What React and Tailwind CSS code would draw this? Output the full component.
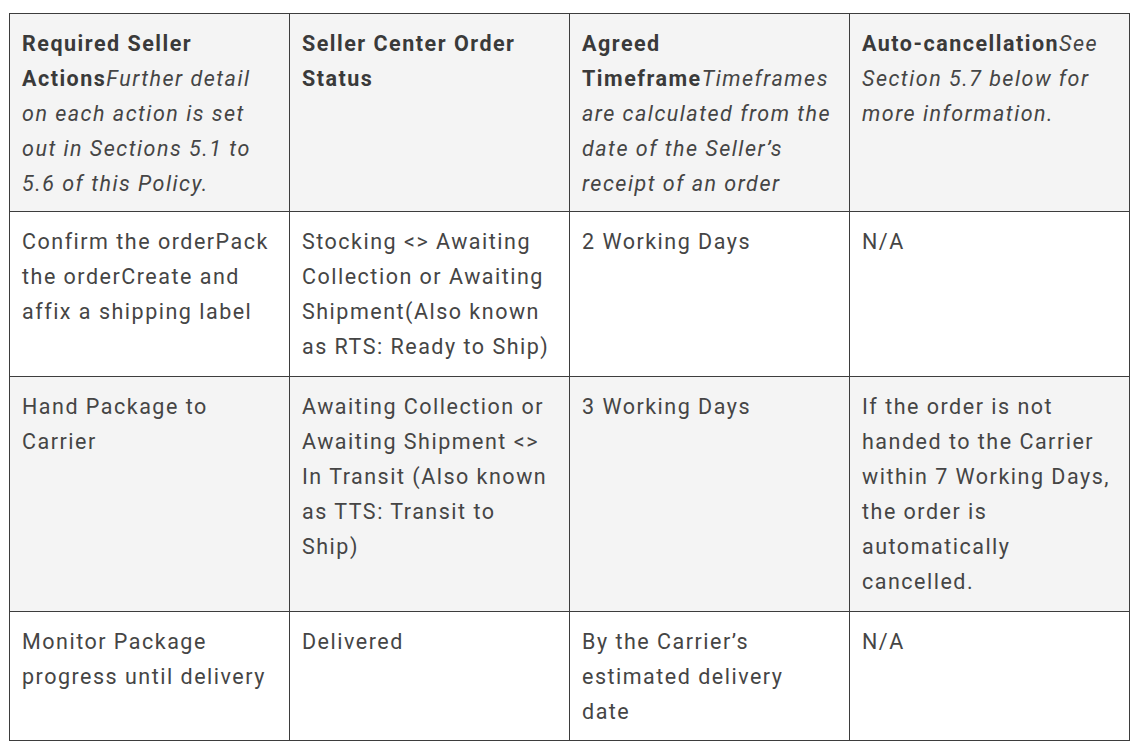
export default function App() {
  const rows = [
    {
      bg: "bg-white",
      pad: "pb-3",
      cells: [
        "Confirm the orderPack the orderCreate and affix a shipping label",
        "Stocking <> Awaiting Collection or Awaiting Shipment(Also known as RTS: Ready to Ship)",
        "2 Working Days",
        "N/A",
      ],
    },
    {
      bg: "bg-[#f4f4f4]",
      pad: "pb-3",
      cells: [
        "Hand Package to Carrier",
        "Awaiting Collection or Awaiting Shipment <> In Transit (Also known as TTS: Transit to Ship)",
        "3 Working Days",
        "If the order is not handed to the Carrier within 7 Working Days, the order is automatically cancelled.",
      ],
    },
    {
      bg: "bg-white",
      pad: "pb-[11px]",
      cells: [
        "Monitor Package progress until delivery",
        "Delivered",
        "By the Carrier\u2019s estimated delivery date",
        "N/A",
      ],
    },
  ];
  const cell = "border border-[#3d3d3d] align-top px-3 pt-3 text-left";
  const head = cell + " pb-[10px] font-normal";
  return (
    <div
      className="min-h-[753px] bg-white pl-[9px] pt-[13px] text-[21.5px] leading-[35px] tracking-[1.5px] text-[#454545]"
      style={{ fontFamily: "Roboto, 'Liberation Sans', sans-serif" }}
    >
      <table className="w-[1120px] table-fixed border-collapse">
        <colgroup>
          <col className="w-[280px]" />
          <col className="w-[280px]" />
          <col className="w-[280px]" />
          <col className="w-[280px]" />
        </colgroup>
        <thead>
          <tr className="bg-[#f4f4f4]">
            <th className={head}>
              <b className="font-bold text-[#3a3a3a]">Required Seller Actions</b>
              <i>Further detail on each action is set out in Sections 5.1 to 5.6 of this Policy.</i>
            </th>
            <th className={head}>
              <b className="font-bold text-[#3a3a3a]">Seller Center Order Status</b>
            </th>
            <th className={head}>
              <b className="font-bold text-[#3a3a3a]">Agreed Timeframe</b>
              <i>Timeframes are calculated from the date of the Seller&rsquo;s receipt of an order</i>
            </th>
            <th className={head}>
              <b className="font-bold text-[#3a3a3a]">Auto-cancellation</b>
              <i>See Section 5.7 below for more information.</i>
            </th>
          </tr>
        </thead>
        <tbody>
          {rows.map((r, i) => (
            <tr key={i} className={r.bg}>
              {r.cells.map((c, j) => (
                <td key={j} className={cell + " " + r.pad}>
                  {c}
                </td>
              ))}
            </tr>
          ))}
        </tbody>
      </table>
    </div>
  );
}
